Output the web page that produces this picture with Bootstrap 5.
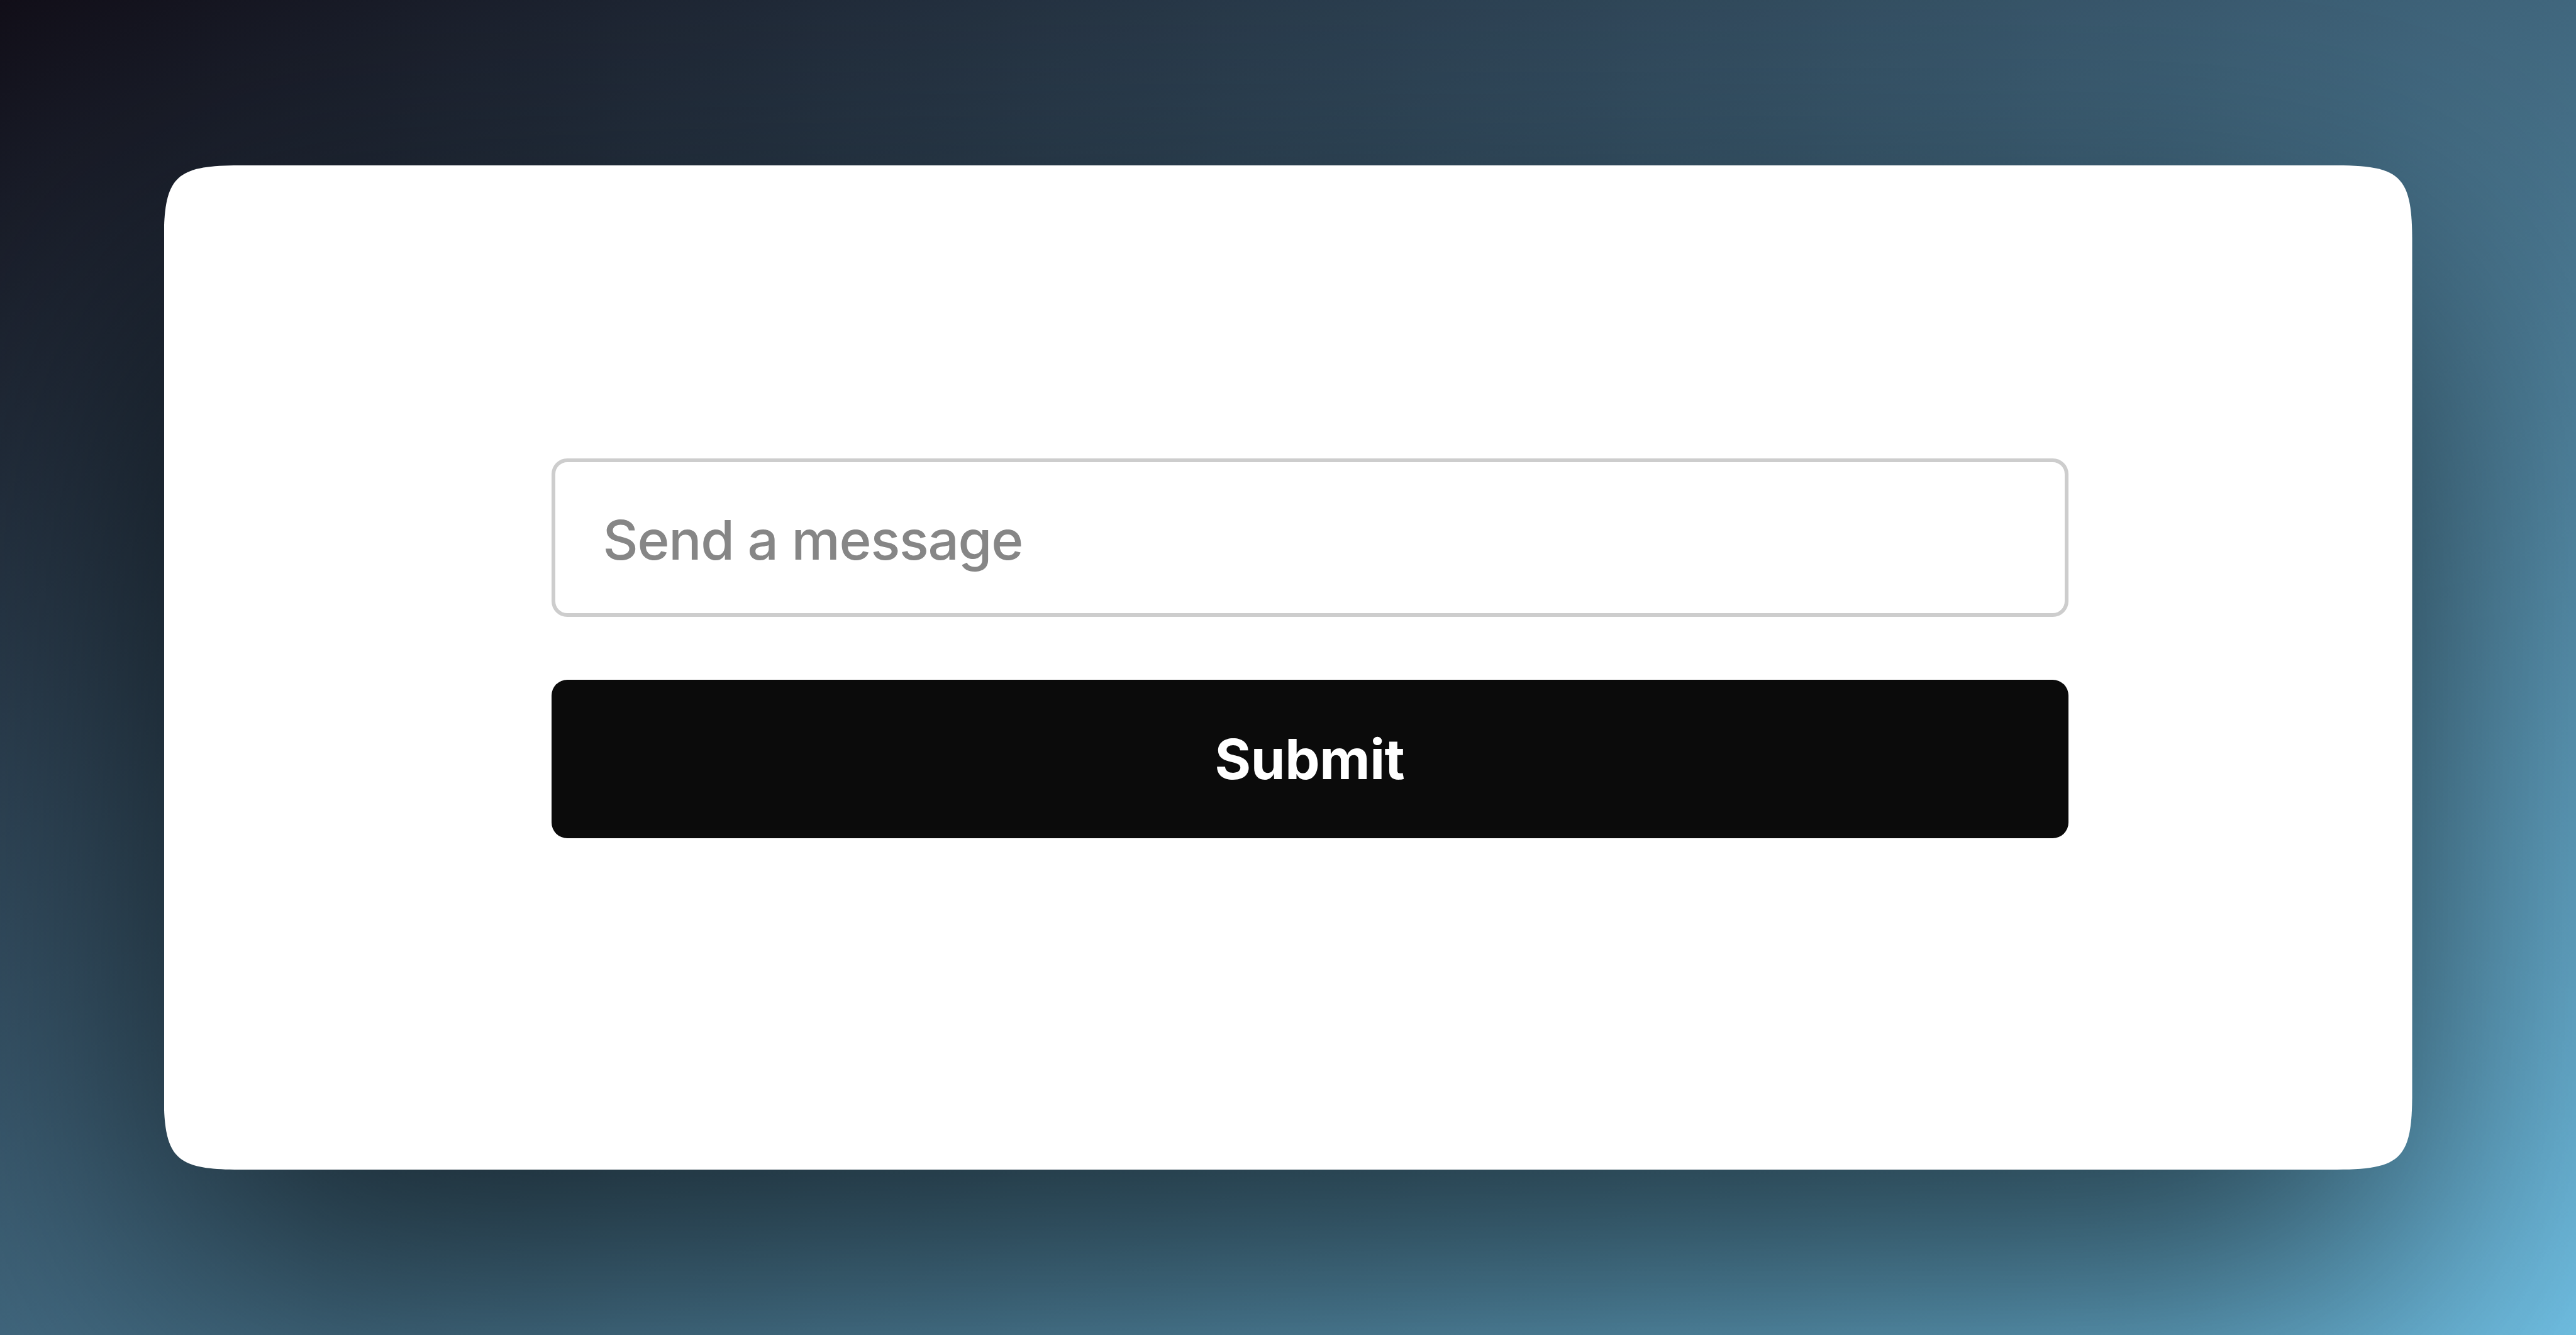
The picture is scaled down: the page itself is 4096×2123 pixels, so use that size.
<!DOCTYPE html>
<html lang="en">
<head>
  <meta charset="UTF-8">
  <meta name="viewport" content="width=device-width, initial-scale=1">
  <title>Send a message</title>

  <link href="https://cdn.jsdelivr.net/npm/bootstrap@5.3.0/dist/css/bootstrap.min.css" rel="stylesheet">

  <style>
    body {
        font-family: Inter, "Liberation Sans", sans-serif;
        background: linear-gradient(to bottom right, #120f19, #70c0e4);
    }
    .panel-shadow {
        width: 3575px;
        height: 1597px;
        filter: drop-shadow(0 193px 235px rgba(0, 0, 0, 0.63));
    }
    /* squircle corners */
    .panel {
        padding: 466px 547px 0 616px;
        clip-path: path("M0 120C0 18 18 0 120 0H3455C3557 0 3575 18 3575 120V1477C3575 1579 3557 1597 3455 1597H120C18 1597 0 1579 0 1477Z");
    }
    .message-form {
        gap: 100px;
    }
    .message-form .form-control,
    .message-form .btn {
        height: 252px;
        border-radius: 25px;
        line-height: 1;
    }
    .message-form .form-control {
        border: 6px solid #cdcdcd;
        padding: 6px 76px 0;
        font-size: 87px;
        font-weight: 500;
        letter-spacing: -1.3px;
    }
    .message-form .form-control::placeholder {
        color: #868686;
    }
    .message-form .btn {
        background: #0b0b0b;
        border: 0;
        padding-top: 6px;
        color: #fff;
        font-size: 88px;
        font-weight: 700;
        letter-spacing: -0.4px;
    }
  </style>
</head>
<body class="vh-100 overflow-hidden d-flex align-items-center justify-content-center">

<div class="panel-shadow">
  <div class="panel bg-white h-100">
    <form id="messageForm" class="message-form d-flex flex-column">
      <input type="text" id="message" class="form-control" placeholder="Send a message" aria-label="Send a message">
      <button type="submit" class="btn w-100">Submit</button>
    </form>
  </div>
</div>

<script src="https://cdn.jsdelivr.net/npm/bootstrap@5.3.0/dist/js/bootstrap.bundle.min.js"></script>
<script>
  document.getElementById("messageForm").addEventListener("submit", function (event) {
      event.preventDefault();
  });
</script>

</body>
</html>
